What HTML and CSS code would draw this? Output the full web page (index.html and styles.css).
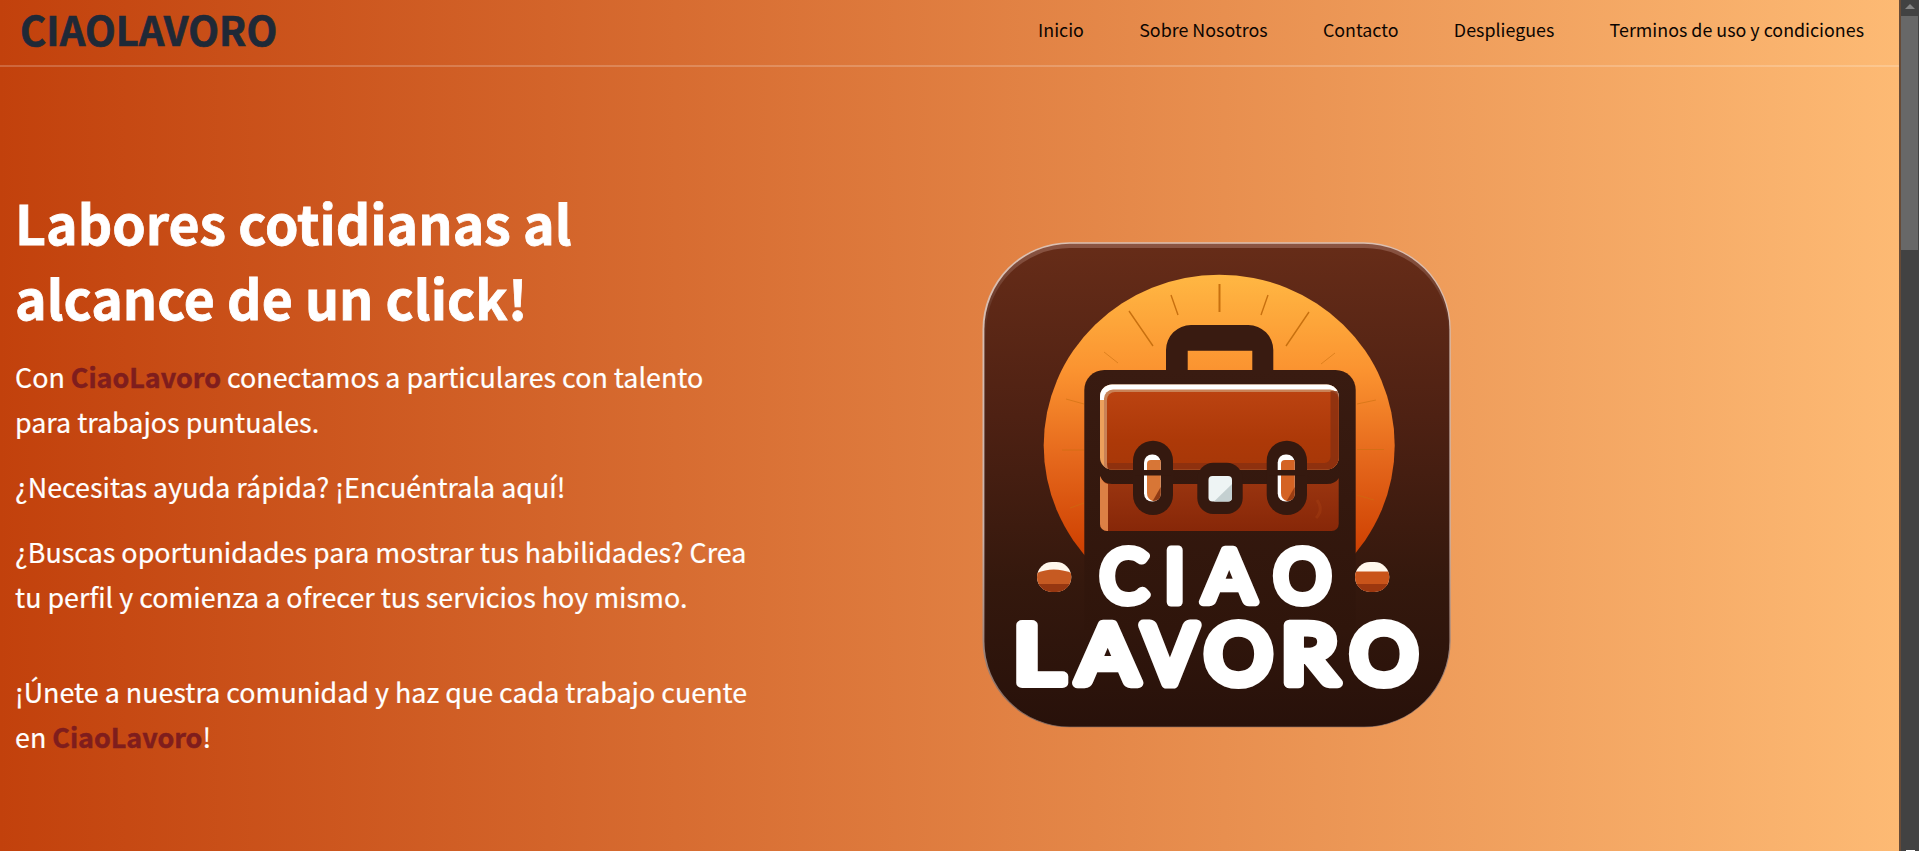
FILE: index.html
```html
<!DOCTYPE html>
<html lang="es">
<head>
<meta charset="utf-8">
<title>CiaoLavoro</title>
<link rel="stylesheet" href="styles.css">
</head>
<body>
<div class="page">
  <header class="header">
    <a class="brand">CIAOLAVORO</a>
    <nav class="nav">
      <a>Inicio</a><a>Sobre Nosotros</a><a>Contacto</a><a>Despliegues</a><a>Terminos de uso y condiciones</a>
    </nav>
  </header>
  <main class="hero">
    <section class="copy">
      <h1>Labores cotidianas al<br>alcance de un click!</h1>
      <p>Con <strong>CiaoLavoro</strong> conectamos a particulares con talento<br>para trabajos puntuales.</p>
      <p>¿Necesitas ayuda rápida? ¡Encuéntrala aquí!</p>
      <p>¿Buscas oportunidades para mostrar tus habilidades? Crea<br>tu perfil y comienza a ofrecer tus servicios hoy mismo.</p>
      <p class="join">¡Únete a nuestra comunidad y haz que cada trabajo cuente<br>en <strong>CiaoLavoro</strong>!</p>
    </section>
    <svg class="logo" viewBox="983 242 468 486" width="468" height="486">
      <defs>
        <linearGradient id="bg" x1="0" y1="0" x2="0" y2="1"><stop offset="0" stop-color="#662c18"/><stop offset=".35" stop-color="#4e2113"/><stop offset=".7" stop-color="#34180d"/><stop offset="1" stop-color="#28110a"/></linearGradient>
        <linearGradient id="sun" x1="0" y1="0" x2="0" y2="1"><stop offset="0" stop-color="#ffb743"/><stop offset=".28" stop-color="#fb9330"/><stop offset=".55" stop-color="#e4661b"/><stop offset=".8" stop-color="#cf4203"/><stop offset="1" stop-color="#c93a00"/></linearGradient>
        <linearGradient id="dark" x1="0" y1="0" x2="0" y2="1"><stop offset="0" stop-color="#391b11"/><stop offset="1" stop-color="#2f150b"/></linearGradient>
        <linearGradient id="flap" x1="0" y1="0" x2="0" y2="1"><stop offset="0" stop-color="#bb4311"/><stop offset=".6" stop-color="#ad3908"/><stop offset="1" stop-color="#a63708"/></linearGradient>
        <linearGradient id="low" x1="0" y1="0" x2="0" y2="1"><stop offset="0" stop-color="#9c3610"/><stop offset="1" stop-color="#872708"/></linearGradient>
        <linearGradient id="rim" x1="0" y1="0" x2="0" y2="1"><stop offset="0" stop-color="#dcc0b2"/><stop offset=".6" stop-color="#c8b0a8"/><stop offset="1" stop-color="#80655a"/></linearGradient>
        <linearGradient id="edge" x1="0" y1="0" x2="0" y2="1"><stop offset="0" stop-color="#8b5543"/><stop offset=".2" stop-color="#56291b"/><stop offset="1" stop-color="#28110a"/></linearGradient>
        <clipPath id="pl"><rect x="1037" y="562" width="34.3" height="30" rx="15"/></clipPath>
        <clipPath id="pr"><rect x="1355" y="562" width="34.3" height="30" rx="15"/></clipPath>
        <clipPath id="flapclip"><rect x="1100" y="384.5" width="238.7" height="85" rx="12"/></clipPath>
        <clipPath id="lowclip"><rect x="1100" y="470" width="238.7" height="61" rx="7"/></clipPath>
      </defs>
      <rect x="982.5" y="242.300" width="468.2" height="485" rx="87" fill="url(#rim)"/>
      <rect x="984.4" y="243.800" width="465" height="482.8" rx="85.5" fill="url(#edge)"/>
      <rect x="986" y="248" width="462.500" height="478.3" rx="84" fill="url(#bg)"/>
      <ellipse cx="1219.2" cy="445.500" rx="175.5" ry="170.8" fill="url(#sun)"/>
      <g class="rays">
        <path d="M1219.5 284v28" stroke-width="2"/>
        <path d="M1171 295l7 20M1268 295l-7 20M1129 311l24 35M1309 312l-23 34" stroke-width="1.4"/>
        <path d="M1104 352l14 11M1335 353l-14 11M1066 399l18 5M1376 400l-19 4M1062 450h22M1384 449.500h-27M1070 508l14-5M1374 500l-17-5" stroke-width=".9" opacity=".65"/>
      </g>
      <path d="M1166 372V350a25 25 0 0 1 25-25h57.300a25 25 0 0 1 25 25v22h-21v-21.300h-64.600V372z" fill="#391b11"/>
      <path d="M1084.300 630V390a20 20 0 0 1 20-20h231.400a20 20 0 0 1 20 20V630z" fill="url(#dark)"/>
      <g clip-path="url(#flapclip)">
        <rect x="1100" y="384" width="239" height="86" fill="#eca05c"/>
        <path d="M1100 400v-16h239v16z" fill="#fff"/>
        <rect x="1104" y="389.500" width="235" height="90" rx="9" fill="#c98257"/>
        <rect x="1107" y="392" width="232" height="80" rx="8" fill="url(#flap)"/>
        <path d="M1330.500 391h9v80h-232v-8h217a6 6 0 0 0 6-6z" fill="#852f10" opacity=".75"/>
      </g>
      <g clip-path="url(#lowclip)">
        <path d="M1100 476q3 8 12 8h215q8 0 12-6v53h-239z" fill="url(#low)"/>
        <path d="M1100 476q3 7 8 8v47h-8z" fill="#dc8045"/>
        <path d="M1317 500q7 10-1 18" fill="none" stroke="#b84a18" stroke-width="3" opacity=".25"/>
      </g>
      <g id="buckles">
        <rect x="1133" y="440.700" width="40" height="74.300" rx="20" fill="#35190f"/>
        <rect x="1144" y="454.500" width="16.700" height="47" rx="8" fill="#fff"/>
        <path d="M1147 464q0-4 4-4h9.700v33q0 8-8 8-5.700-2-5.700-8z" fill="#d87636"/>
        <path d="M1160.700 487v6q0 8-8 8z" fill="#8f3b15"/>
        <rect x="1266.700" y="440.700" width="40.300" height="74.300" rx="20" fill="#35190f"/>
        <rect x="1277.700" y="454.500" width="17" height="47" rx="8" fill="#fff"/>
        <path d="M1281 464q0-4 4-4h9.700v33q0 8-8 8-5.700-2-5.700-8z" fill="#d46324"/>
        <path d="M1294.700 487v6q0 8-8 8z" fill="#9b3d12"/>
        <path d="M1135 470h36v5.500h-36zM1269 470h36v5.500h-36z" fill="#35190f"/>
        <rect x="1197.300" y="462.700" width="45.400" height="51.300" rx="16" fill="#35190f"/>
        <rect x="1208.500" y="476" width="23.500" height="25.500" rx="4" fill="#eef4f4"/>
        <path d="M1232 484v13.500a4 4 0 0 1-4 4h-14z" fill="#c4d0d1"/>
      </g>
      <g clip-path="url(#pl)"><rect x="1037" y="562" width="35" height="30" fill="#fff7ec"/><path d="M1037 573q16-7 35 0v20h-35z" fill="#c65a22"/><path d="M1037 584h35v8h-35z" fill="#963711"/></g>
      <g clip-path="url(#pr)"><rect x="1355" y="562" width="35" height="30" fill="#fff7ec"/><path d="M1355 571.500h35v20h-35z" fill="#c9541a"/><path d="M1355 584h35v8h-35z" fill="#9c370f"/></g>
      <g class="word small">
        <text transform="translate(1124 601.500)">C</text>
        <text transform="translate(1174.600 601.500)">I</text>
        <text transform="translate(1229.300 601.500) scale(1.08 1)">A</text>
        <text transform="translate(1302.500 601.500)">O</text>
      </g>
      <g class="word big">
        <text transform="translate(1038.500 683) scale(1.2 1)">L</text>
        <text transform="translate(1107.800 683) scale(1.09 1)">A</text>
        <text transform="translate(1170 683) scale(.96 1)">V</text>
        <text transform="translate(1238.500 683) scale(1.02 1)">O</text>
        <text transform="translate(1309.500 683) scale(1.1 1)">R</text>
        <text transform="translate(1384 683) scale(1.02 1)">O</text>
      </g>
    </svg>
  </main>
</div>
<div class="scrollbar"><div class="arrow-box"><span class="arrow"></span></div><div class="thumb"></div><span class="corner"></span></div>
</body>
</html>
```
FILE: styles.css
```css
* { box-sizing: border-box; }
body {
  margin: 0;
  height: 851px;
  overflow: hidden;
  display: flex;
  font-family: "Noto Sans CJK JP", "Noto Sans CJK SC", sans-serif;
}
.page {
  width: 1899px;
  height: 851px;
  background: linear-gradient(to right, #c2410c, #fdba74);
}
.header {
  height: 67px;
  border-bottom: 2px solid rgba(255, 255, 255, .2);
  display: flex;
  justify-content: space-between;
  align-items: center;
  padding: 0 35px 7px 20px;
}
.brand { font-size: 40px; line-height: 58px; font-weight: 700; color: #1f2937; -webkit-text-stroke: .7px #1f2937; letter-spacing: .1px; }
.nav { display: flex; gap: 55.3px; font-size: 17.87px; line-height: 27px; color: #0c0501; }
.hero { display: flex; }
.copy { flex: none; width: 983px; padding: 117px 0 0 15px; color: #fff; }
h1 { margin: 0 0 20px; font-size: 53.6px; line-height: 75px; font-weight: 700; -webkit-text-stroke: .8px #fff; }
p { margin: 0 0 20px; font-size: 26.86px; line-height: 45px; -webkit-text-stroke: .2px currentColor; }
.join { margin-top: 50px; }
strong { color: #7f1d1d; font-weight: 700; -webkit-text-stroke: .5px #7f1d1d; }
.logo { display: block; flex: none; margin-top: 175px; overflow: visible; }
.rays { fill: none; stroke: #c8700f; }
.word { font-family: Lato, sans-serif; font-weight: 400; fill: #fff; stroke: #fff; stroke-linejoin: round; text-anchor: middle; }
.word text { vector-effect: non-scaling-stroke; }
.small { font-size: 71px; stroke-width: 9px; }
.big { font-size: 82px; stroke-width: 11px; }
.scrollbar {
  position: relative;
  width: 20px;
  height: 851px;
  background: #424242;
  border-left: 2px solid #674a36;
}
.arrow-box { height: 16px; display: flex; justify-content: center; align-items: center; padding-bottom: 3px; }
.arrow { border: 5px solid transparent; border-top: 0; border-bottom: 5px solid #868686; }
.thumb { width: 17px; height: 234px; background: #686868; }
.corner { position: absolute; left: 5px; bottom: 0; width: 9px; height: 1px; background: #fff; }
```
